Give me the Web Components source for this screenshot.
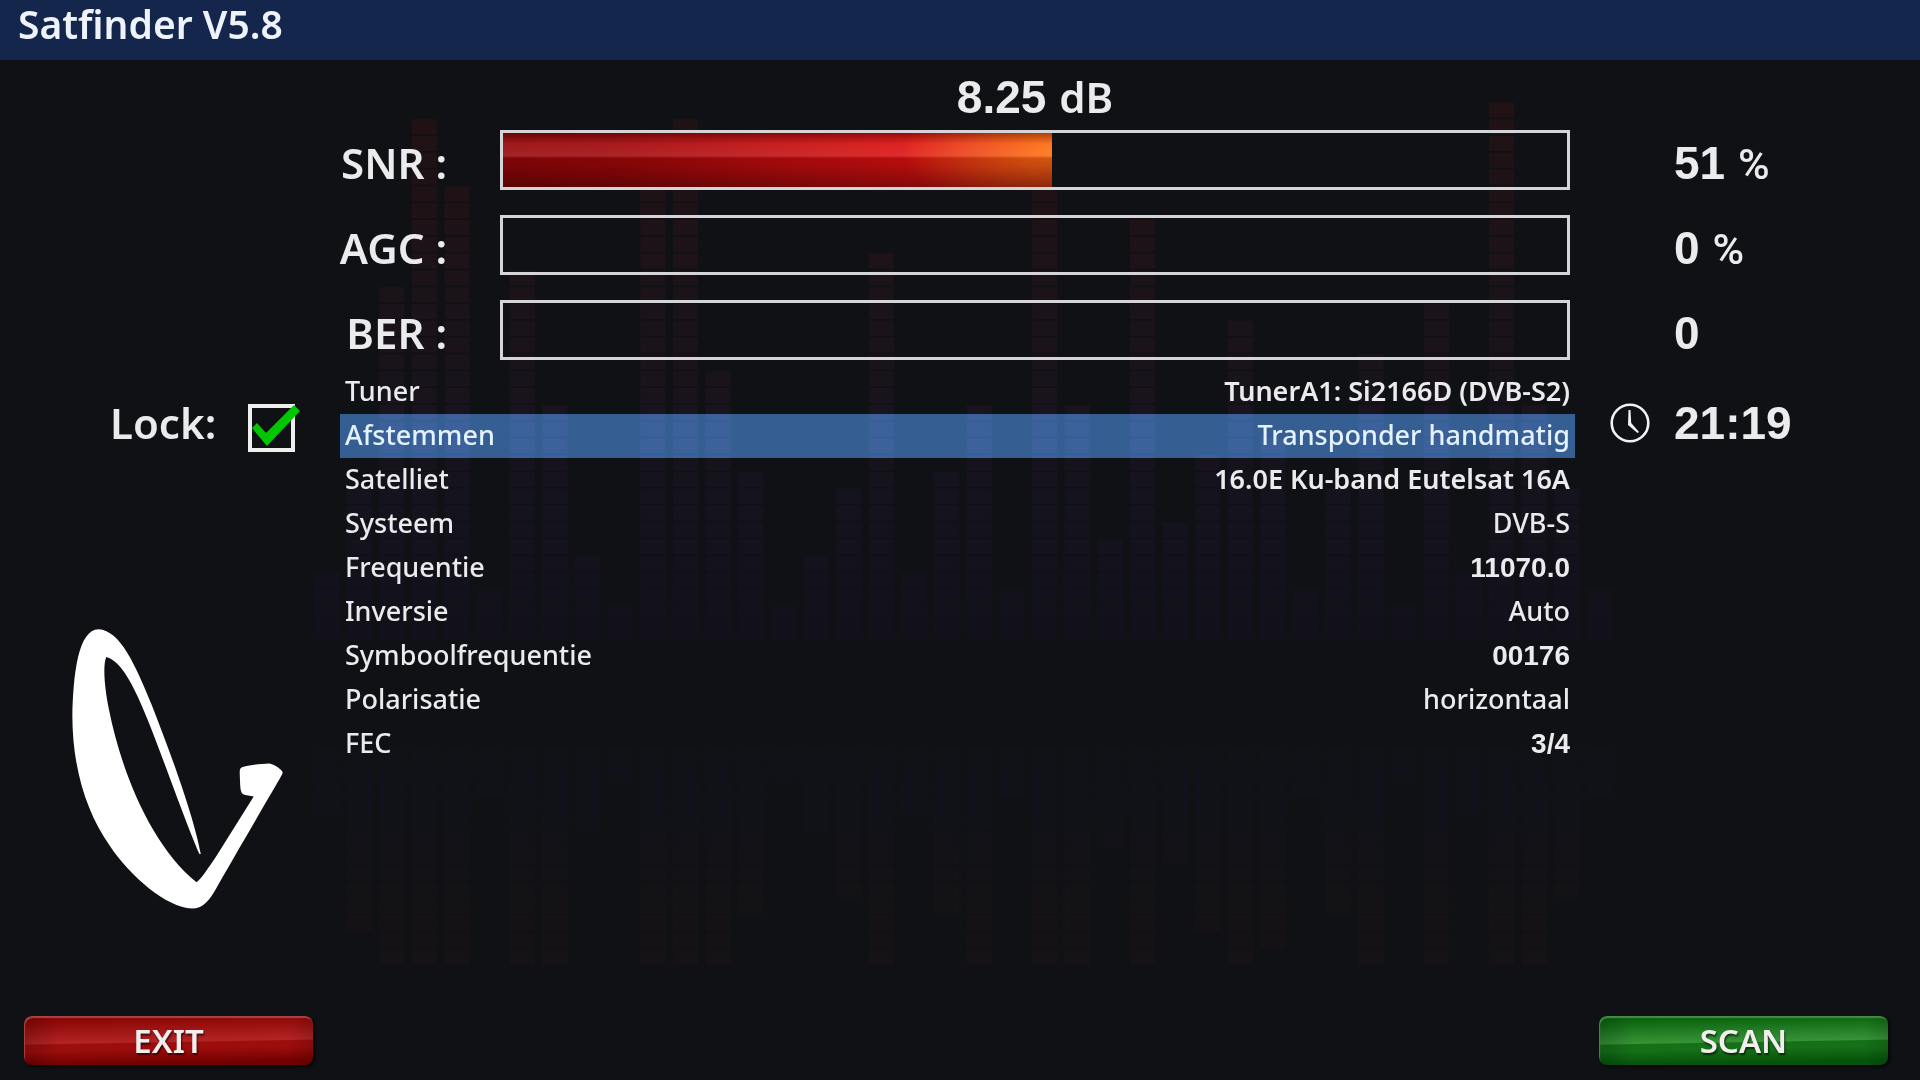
<!DOCTYPE html>
<html lang="nl">
<head>
<meta charset="utf-8">
<title>Satfinder V5.8</title>
<style>
  html, body { margin: 0; height: 100%; background: #101115; }
</style>
</head>
<body>
<satfinder-app></satfinder-app>

<template id="app-tpl">
  <style>
    :host {
      --ui: "Noto Sans", sans-serif;
      --digits: "Liberation Sans", sans-serif;
      display: flex; flex-direction: column; min-height: 100vh;
      position: relative; isolation: isolate; overflow: hidden;
      box-sizing: border-box; background: #101115; color: #ebebed;
      font: 500 27px/42px var(--ui);
    }
    header { background: #14264b; height: 60px; padding-left: 18px; }
    h1 { margin: 0; color: #edf2fb; font: 600 39px/48px var(--ui); }
    main { display: flex; flex-direction: column; }
    .meters { display: flex; flex-direction: column; gap: 21px; }
    .body { display: grid; grid-template-columns: 340px 1fr 345px; padding-top: 6px; }
    .side { display: flex; flex-direction: column; gap: 175px; padding-top: 22px; }
    sat-logo { margin-left: 72px; }
    footer {
      display: flex; justify-content: space-between;
      margin-top: auto; padding: 0 32px 15px 24px;
    }
  </style>
  <equalizer-backdrop></equalizer-backdrop>
  <header><h1>Satfinder V5.8</h1></header>
  <main>
    <signal-level value="8.25" unit="dB"></signal-level>
    <div class="meters">
      <signal-meter label="SNR :" value="51" unit="%" level="51.6"></signal-meter>
      <signal-meter label="AGC :" value="0" unit="%" level="0"></signal-meter>
      <signal-meter label="BER :" value="0" level="0"></signal-meter>
    </div>
    <div class="body">
      <div class="side">
        <lock-state>Lock:</lock-state>
        <sat-logo></sat-logo>
      </div>
      <config-list>
        <config-row strong>Tuner<span slot="value">TunerA1: Si2166D (DVB-S2)</span></config-row>
        <config-row selected>Afstemmen<span slot="value">Transponder handmatig</span></config-row>
        <config-row strong>Satelliet<span slot="value">16.0E Ku-band Eutelsat 16A</span></config-row>
        <config-row>Systeem<span slot="value">DVB-S</span></config-row>
        <config-row numeric>Frequentie<span slot="value">11070.0</span></config-row>
        <config-row>Inversie<span slot="value">Auto</span></config-row>
        <config-row numeric>Symboolfrequentie<span slot="value">00176</span></config-row>
        <config-row>Polarisatie<span slot="value">horizontaal</span></config-row>
        <config-row numeric>FEC<span slot="value">3/4</span></config-row>
      </config-list>
      <clock-display>21:19</clock-display>
    </div>
  </main>
  <footer>
    <color-button tone="red">EXIT</color-button>
    <color-button tone="green">SCAN</color-button>
  </footer>
</template>

<template id="backdrop-tpl">
  <style>
    :host { position: absolute; inset: 0; z-index: -1; }
    svg { display: block; width: 100%; height: 100%; }
  </style>
  <svg viewBox="0 0 1920 1080" preserveAspectRatio="none" aria-hidden="true">
    <defs>
      <linearGradient id="up" gradientUnits="userSpaceOnUse" x1="0" x2="0" y1="100" y2="640">
        <stop offset="0" stop-color="#211214"/><stop offset=".37" stop-color="#1c131a"/>
        <stop offset=".74" stop-color="#15131e"/><stop offset="1" stop-color="#12111b"/>
      </linearGradient>
      <linearGradient id="down" gradientUnits="userSpaceOnUse" x1="0" x2="0" y1="746" y2="965">
        <stop offset="0" stop-color="#0f1217"/><stop offset=".25" stop-color="#11111a"/>
        <stop offset=".6" stop-color="#131216"/><stop offset="1" stop-color="#161215"/>
      </linearGradient>
    </defs>
    <path class="up" fill="url(#up)"/>
    <path class="down" fill="url(#down)"/>
  </svg>
</template>

<template id="level-tpl">
  <style>
    :host {
      display: grid; grid-template-columns: 445px 1fr 246px; box-sizing: border-box;
      padding-top: 4px; font: 700 46px/66px var(--digits);
    }
    p { grid-column: 2; margin: 0; padding: 0 104px 0 55px; text-align: center; white-space: pre; }
    .unit { font: 600 42px/1 var(--ui); }
  </style>
  <p><span class="value"></span> <span class="unit"></span></p>
</template>

<template id="meter-tpl">
  <style>
    :host {
      display: grid; grid-template-columns: 447px 1fr 246px; height: 64px;
      font: 600 42px/66px var(--ui);
    }
    label { text-align: right; }
    progress {
      appearance: none; -webkit-appearance: none; display: block; box-sizing: border-box;
      width: calc(100% - 157px); height: 60px; margin: 0 104px 0 53px;
      border: 3px solid #d5d4d9; background: none;
    }
    progress::-webkit-progress-bar { background: none; }
    progress::-webkit-progress-value {
      background:
        linear-gradient(#0000004d, #ffffff14 20%, #ffffff1f 42%, #0000002b 47%, #00000030 60%, #00000066),
        radial-gradient(ellipse 150px 70px at 100% 30%, #ff7010, #f8641499 50%, transparent),
        linear-gradient(90deg, #960608, #a00709 20%, #c20c0e 50%, #dc1010 75%, #e01c10);
    }
    output { font: 700 46px/66px var(--digits); white-space: pre; }
    .unit { font: 500 43px/1 Roboto, sans-serif; }
  </style>
  <label for="bar"></label>
  <progress id="bar" max="100"></progress>
  <output for="bar"><span class="value"></span><span class="unit"></span></output>
</template>

<template id="lock-tpl">
  <style>
    :host { display: block; font: 600 42px/62px var(--ui); }
    label { display: flex; align-items: center; gap: 32px; padding-left: 110px; }
    .box { display: grid; }
    input, svg { grid-area: 1 / 1; }
    input {
      appearance: none; -webkit-appearance: none; margin: 10px 0 0; box-sizing: border-box;
      width: 47px; height: 48px; border: 4px solid #eee;
    }
    svg { width: 52px; height: 48px; margin: 10px 0 0; pointer-events: none; }
    input:not(:checked) + svg { visibility: hidden; }
  </style>
  <label for="lock"><slot></slot>
    <span class="box">
      <input id="lock" type="checkbox" checked>
      <svg viewBox="0 0 52 48" aria-hidden="true"><path d="M4 24 9 19 18 29 46 1 52 7 19 42Z" fill="#00c800"/></svg>
    </span>
  </label>
</template>

<template id="logo-tpl">
  <style>:host { display: block; width: 211px; } svg { display: block; width: 100%; }</style>
  <svg viewBox="96 88 634 840" role="img" aria-label="Logo">
    <path fill="#fff" d="M176 89C240 92 286 195 335 315C390 455 462 650 483 764H479C445 690 375 490 323 360C282 258 245 185 199 172C189 195 192 255 207 330C245 520 335 740 470 849C486 838 505 806 530 770L642 591L617 587C603 584 602 572 601 550L600 522C600 506 602 505 612 502C635 496 665 493 690 492C706 496 730 512 729 520C729 526 705 562 530 866C512 898 492 928 456 928C380 925 270 830 210 740C140 640 98 510 97 350C100 220 115 90 176 89Z"/>
  </svg>
</template>

<template id="list-tpl">
  <style>:host { display: flex; flex-direction: column; }</style>
  <slot></slot>
</template>

<template id="row-tpl">
  <style>
    :host { display: grid; grid-template-columns: auto 1fr; padding: 0 5px; align-items: baseline; height: 44px; }
    :host([selected]) { color: #e4f1ff; padding: 0; }
    :host([selected])::before {
      content: ""; grid-area: 1 / 1 / 2 / 3; height: 44px; align-self: start;
      background: #254e7e; mix-blend-mode: plus-lighter;
    }
    :host([selected]) .name { padding-left: 5px; }
    :host([selected]) .val { padding-right: 5px; }
    .name, .val { z-index: 1; grid-row: 1; }
    .name { grid-column: 1; }
    .val { grid-column: 2; text-align: right; }
    :host([strong]) .val { font-weight: 600; }
    :host([numeric]) .val { font: 700 28px/42px var(--digits); }
  </style>
  <div class="name"><slot></slot></div>
  <div class="val"><slot name="value"></slot></div>
</template>

<template id="clock-tpl">
  <style>
    :host { display: flex; align-items: flex-start; gap: 24px; padding: 22px 0 0 35px; font: 700 46px/62px var(--digits); }
    svg { width: 40px; height: 40px; margin-top: 11px; }
  </style>
  <svg viewBox="0 0 40 40" fill="none" stroke="#f2f2f4" aria-hidden="true">
    <circle cx="20" cy="20" r="18.3" stroke-width="2.6"/>
    <path d="M18.5 7H20.5L21.2 20 29 29 27.5 30 18 22Z" fill="#f2f2f4" stroke="none"/>
  </svg>
  <time><slot></slot></time>
</template>

<template id="button-tpl">
  <style>
    :host { display: block; }
    :host([tone="red"]) { --a: #8c0606; --b: #b32424; --c: #9c0d0d; --d: #720000; --e: #a84444; }
    :host([tone="green"]) { --a: #0b640f; --b: #379337; --c: #157018; --d: #05520a; --e: #458a47; }
    button {
      display: block; width: 289px; height: 49px; padding: 0; margin: 0; border: 0; border-radius: 8px;
      color: #f3eeee; font: 600 33px/50px var(--ui); text-shadow: 1px 2px 2px #0009;
      background:
        linear-gradient(90deg, #00000030, transparent 12%, transparent 92%, #0002),
        linear-gradient(179deg, var(--a) 8%, var(--b) 52%, var(--c) 54%, var(--c) 65%, var(--d) 92%);
      box-shadow: inset 1px 2px 1px var(--e), 2px 2px 3px #000a;
    }
  </style>
  <button type="button"><slot></slot></button>
</template>

<script>
  class TemplateElement extends HTMLElement {
    constructor() {
      super();
      const tpl = document.getElementById(this.constructor.template);
      this.attachShadow({ mode: 'open' }).append(tpl.content.cloneNode(true));
    }
    $(selector) { return this.shadowRoot.querySelector(selector); }
  }

  class EqualizerBackdrop extends TemplateElement {
    static template = 'backdrop-tpl';
    // Lit segments per column: the spectrum itself, then its faint reflection.
    static spectrum = [4,9,21,31,27,3,22,14,5,2,28,31,16,10,2,5,9,23,4,10,14,3,27,14,6,25,7,11,19,12,3,9,17,2,20,4,32,14,9,3];
    static reflection = [4,11,13,13,13,3,13,13,5,2,13,13,13,10,2,5,9,13,4,10,13,3,13,13,6,13,7,11,13,12,3,10,13,2,13,4,13,13,9,3];
    connectedCallback() {
      const first = 314, pitch = 32.64, step = 16.8;
      const draw = (counts, top) => counts.map((n, c) =>
        Array.from({ length: n }, (_, i) => `M${(first + c * pitch).toFixed(1)} ${top(i).toFixed(1)}h25v15h-25z`).join('')).join('');
      this.$('.up').setAttribute('d', draw(EqualizerBackdrop.spectrum, i => 639 - (i + 1) * step + 1));
      this.$('.down').setAttribute('d', draw(EqualizerBackdrop.reflection, i => 748 + i * step));
    }
  }

  class SignalLevel extends TemplateElement {
    static template = 'level-tpl';
    connectedCallback() {
      this.$('.value').textContent = this.getAttribute('value');
      this.$('.unit').textContent = this.getAttribute('unit');
    }
  }

  class SignalMeter extends TemplateElement {
    static template = 'meter-tpl';
    connectedCallback() {
      this.$('label').textContent = this.getAttribute('label');
      this.$('progress').value = Number(this.getAttribute('level'));
      const unit = this.getAttribute('unit');
      this.$('.value').textContent = this.getAttribute('value') + (unit ? ' ' : '');
      this.$('.unit').textContent = unit || '';
    }
  }

  const define = (name, template) =>
    customElements.define(name, class extends TemplateElement { static template = template; });

  customElements.define('equalizer-backdrop', EqualizerBackdrop);
  customElements.define('signal-level', SignalLevel);
  customElements.define('signal-meter', SignalMeter);
  define('lock-state', 'lock-tpl');
  define('sat-logo', 'logo-tpl');
  define('config-list', 'list-tpl');
  define('config-row', 'row-tpl');
  define('clock-display', 'clock-tpl');
  define('color-button', 'button-tpl');
  define('satfinder-app', 'app-tpl');
</script>
</body>
</html>
